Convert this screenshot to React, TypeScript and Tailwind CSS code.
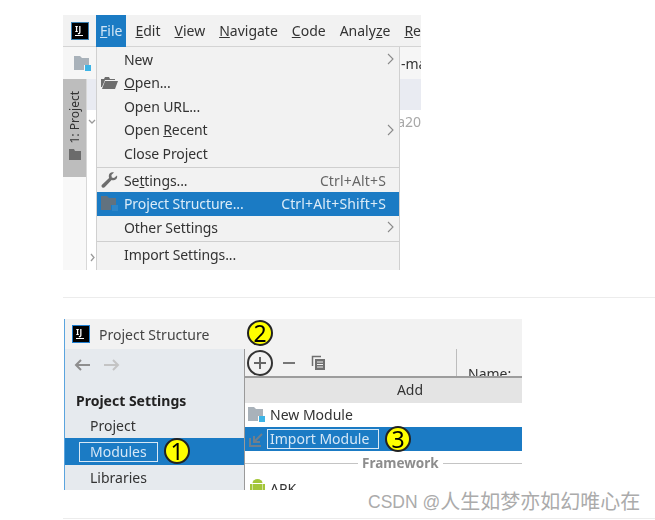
import React from "react";

const Chevron = () => (
  <svg width="7" height="12" viewBox="0 0 7 12" className="absolute right-[5px] top-[5px]" fill="none" stroke="#8a8a8a" strokeWidth="1.1">
    <path d="M1 1l5 5-5 5" />
  </svg>
);

const FolderBlue = ({ body = "#a9b2ba", dot = "#3db4e6" }: { body?: string; dot?: string }) => (
  <svg width="18" height="17" viewBox="0 0 18 17" className="shrink-0">
    <path d="M0 1h6l2 2h7v7h-5v5H0z" fill={body} />
    <rect x="11" y="10" width="6" height="6" fill={dot} />
  </svg>
);

const Logo = ({ blue = false }: { blue?: boolean }) => (
  <div className={`w-[18px] h-[18px] bg-black flex flex-col px-[3px] pt-[1px] shrink-0 ${blue ? "border border-[#1f7ed0]" : "border border-[#3a7fb0]"}`}>
    <span className="text-white text-[8px] font-bold leading-[9px] tracking-[0.5px]">IJ</span>
    <span className="w-[8px] h-[1px] bg-white mt-[2px]" />
  </div>
);

const Badge = ({ n, className }: { n: string; className: string }) => (
  <div className={`absolute z-20 w-[26px] h-[26px] rounded-full bg-[#ffff00] border-2 border-[#222] flex items-center justify-center text-[23px] leading-none text-black ${className}`}>
    {n}
  </div>
);

type Item = { label: React.ReactNode; h: string; shortcut?: string; arrow?: boolean; icon?: React.ReactNode; active?: boolean };

const MenuRow = ({ label, h, shortcut, arrow, icon, active }: Item) => (
  <div className={`relative flex items-center shrink-0 pl-[27px] pr-[13px] ${h} ${active ? "bg-[#1b7bc4] text-[#dcecf8]" : "text-[#333]"}`}>
    {icon && <span className="absolute left-[4px] top-[3px] flex">{icon}</span>}
    <span className="flex-1 tracking-[-0.1px]">{label}</span>
    {shortcut && <span className={`tracking-[0.15px] ${active ? "text-[#dcecf8]" : "text-[#666]"}`}>{shortcut}</span>}
    {arrow && <Chevron />}
  </div>
);

const Sep = () => <div className="h-[1px] bg-[#cfcfcf] my-[1px] shrink-0" />;

export default function App() {
  return (
    <div className="relative w-[655px] h-[520px] bg-white overflow-hidden text-[14px] text-[#333] font-['Noto_Sans','Noto_Sans_CJK_SC',sans-serif]">
      <div className="h-[15px]" />
      {/* First screenshot */}
      <div className="relative ml-[63px] w-[358px] h-[255px] overflow-hidden bg-white flex flex-col blur-[0.35px]">
        <div className="h-[32px] bg-[#f2f2f2] border-b border-[#d4d4d4] flex items-center shrink-0">
          <div className="ml-[8px] mr-[7px]"><Logo /></div>
          <div className="h-[32px] w-[34px] bg-[#1b7bc4] text-[#cfe4f5] flex items-center justify-center"><span><u>F</u>ile</span></div>
          <div className="flex gap-[14px] ml-[9px] whitespace-nowrap">
            <span><u>E</u>dit</span>
            <span><u>V</u>iew</span>
            <span><u>N</u>avigate</span>
            <span><u>C</u>ode</span>
            <span>Analy<u>z</u>e</span>
            <span><u>R</u>e</span>
          </div>
        </div>
        <div className="h-[32px] bg-[#f6f6f6] flex items-center pl-[11px] shrink-0">
          <FolderBlue />
          <span className="ml-[309px] whitespace-nowrap">-ma</span>
        </div>
        <div className="flex flex-1 min-h-0">
          <div className="w-[24px] flex flex-col bg-[#f8f8f8] border-r border-[#d8d8d8]">
            <div className="h-[98px] bg-[#bdbdbd] flex flex-col items-center pt-[12px] gap-[6px] shrink-0">
              <span className="[writing-mode:vertical-rl] rotate-180 text-[12px] leading-none">1: Project</span>
              <svg width="12" height="11" viewBox="0 0 12 11"><path d="M0 0h5l1 2h6v9H0z" fill="#6b6b6b" /></svg>
            </div>
          </div>
          <div className="flex-1 flex flex-col">
            <div className="h-[31px] bg-[#e9ebf2] shrink-0" />
            <div className="flex-1 bg-white flex justify-end items-start pt-[1px] text-[#a8a8a8]">
              <span>a20</span>
            </div>
          </div>
        </div>
        <svg width="8" height="6" viewBox="0 0 8 6" className="absolute left-[25px] top-[104px]" fill="none" stroke="#9a9a9a" strokeWidth="1.300"><path d="M1 1l3 3 3-3" /></svg>
        <svg width="6" height="9" viewBox="0 0 6 9" className="absolute left-[27px] top-[238px]" fill="none" stroke="#9a9a9a" strokeWidth="1.300"><path d="M1 1l3 3.500-3 3.500" /></svg>

        {/* File menu */}
        <div className="absolute left-[33px] top-[32px] w-[304px] h-[223px] bg-[#f2f2f2] border-x border-[#d0d0d0] pt-[1px] flex flex-col">
          <MenuRow label="New" h="h-[24px] pb-[2px]" arrow />
          <MenuRow
            label={<><u>O</u>pen...</>}
            h="h-[23px] pb-[2px]"
            icon={
              <svg width="18" height="14" viewBox="0 0 18 14" className="mt-[1px]">
                <path d="M0 3h3l1-2h4l1 2h5v1H4L1 11H0z" fill="#6d6d6d" />
                <path d="M4 5h13l-3 8H1z" fill="#6d6d6d" />
              </svg>
            }
          />
          <MenuRow label="Open URL..." h="h-[24px] pb-[2px]" />
          <MenuRow label={<>Open <u>R</u>ecent</>} h="h-[23px] pb-[2px]" arrow />
          <MenuRow label="Close Project" h="h-[24px] pb-[2px]" />
          <Sep />
          <MenuRow
            label={<>Se<u>t</u>tings...</>}
            h="h-[23px]"
            shortcut="Ctrl+Alt+S"
            icon={
              <svg width="17" height="17" viewBox="0 0 17 17">
                <path d="M16 3.500l-3 2.500-2.200-.6L10.400 3 13 .6C10.500-.4 7.600 1.200 7.800 4.400c0 .6.2 1 .3 1.500L1 12.800c-.9 1-.6 2.200 1 3 .8.100 1.400-.2 1.900-.7l6.700-7c3.300 1.100 6.400-1.300 5.400-4.600z" fill="#6d6d6d" />
              </svg>
            }
          />
          <MenuRow
            label="Project Structure..."
            h="h-[24px] pb-[2px]"
            shortcut="Ctrl+Alt+Shift+S"
            active
            icon={<FolderBlue body="#62727f" dot="#2f86c8" />}
          />
          <MenuRow label="Other Settings" h="h-[24px] pb-[2px]" arrow />
          <Sep />
          <MenuRow label="Import Settings..." h="h-[24px] pb-[2px]" />
        </div>
      </div>

      <div className="h-[27px]" />
      <div className="h-[1px] bg-[#ececec] ml-[63px] w-[592px]" />
      <div className="h-[21px]" />

      {/* Second screenshot */}
      <div className="relative ml-[64px] w-[458px] h-[171px] overflow-hidden bg-[#f2f2f2] flex flex-col border-l border-l-[#5aa4de] blur-[0.35px]">
        <div className="h-[30px] flex items-center pl-[7px] gap-[9px] shrink-0">
          <Logo blue />
          <span className="text-[#444]">Project Structure</span>
        </div>
        <div className="flex flex-1 min-h-0">
          <div className="w-[180px] bg-[#e6eaee] border-r border-[#9a9a9a] flex flex-col shrink-0">
            <div className="h-[32px] flex items-center pl-[9px] gap-[14px] shrink-0">
              <svg width="16" height="12" viewBox="0 0 16 12" fill="none" stroke="#8e8e8e" strokeWidth="2"><path d="M16 6H2M7 1L2 6l5 5" /></svg>
              <svg width="16" height="12" viewBox="0 0 16 12" fill="none" stroke="#c4c4c4" strokeWidth="2"><path d="M0 6h14M9 1l5 5-5 5" /></svg>
            </div>
            <div className="h-[32px] flex items-end pl-[11px] font-bold text-[#222] leading-[20px] pb-[2px] shrink-0">Project Settings</div>
            <div className="h-[25px] flex items-center pl-[25px] pb-[1px] shrink-0">Project</div>
            <div className="h-[27px] bg-[#1b7bc4] flex items-center pl-[14px] shrink-0">
              <div className="w-[79px] h-[20px] border border-[#d8e8f5] flex items-center pl-[10px] pb-[1px] text-[#d5e7f6]">Modules</div>
            </div>
            <div className="h-[25px] flex items-center pl-[25px] pb-[1px] shrink-0">Libraries</div>
          </div>
          <div className="flex-1 flex flex-col min-w-0">
            <div className="h-[27px] flex items-center shrink-0 relative pl-[38px]">
              <svg width="12" height="2" viewBox="0 0 12 2"><rect width="12" height="2" fill="#777" /></svg>
              <svg width="15" height="15" viewBox="0 0 15 15" className="ml-[16px]" fill="none">
                <path d="M1.500 11V1.500H10" stroke="#6f6f6f" strokeWidth="1.500" />
                <rect x="4" y="4" width="10" height="11" fill="#6f6f6f" />
                <path d="M6 7h6M6 9.500h6M6 12h6" stroke="#f2f2f2" strokeWidth="1" />
              </svg>
              <div className="absolute left-[211px] top-0 h-[27px] w-[1px] bg-[#bdbdbd]" />
              <span className="absolute left-[223px] top-[15px] leading-[20px] text-[#333]">Name:</span>
            </div>
            <div className="flex-1 flex flex-col bg-white border-t-2 border-[#9d9d9d] relative z-10 min-h-0">
              <div className="h-[25px] bg-[#e4e4e4] flex items-center justify-center pl-[53px] pb-[2px] shrink-0">Add</div>
              <div className="h-[24px] flex items-center pl-[3px] gap-[4px] pb-[1px] shrink-0">
                <FolderBlue />
                <span>New Module</span>
              </div>
              <div className="h-[24px] bg-[#1b7bc4] flex items-center pl-[4px] shrink-0">
                <svg width="15" height="15" viewBox="0 0 15 15" fill="none" stroke="#6f7f8c" strokeWidth="2" className="shrink-0">
                  <path d="M1 6v8h11M13 2L5 10M5 4v6h6" />
                </svg>
                <div className="ml-[3px] w-[112px] h-[20px] border border-[#d8e8f5] flex items-center pl-[2px] pb-[1px] text-[#d5e7f6] whitespace-nowrap">Import Module</div>
              </div>
              <div className="h-[25px] flex items-center gap-[4px] shrink-0 pb-[1px]">
                <div className="w-[113px] h-[1px] bg-[#c4c4c4] shrink-0" />
                <span className="font-bold text-[13.5px] text-[#8d8d8d]">Framework</span>
                <div className="flex-1 h-[1px] bg-[#c4c4c4]" />
              </div>
              <div className="h-[24px] flex items-center pl-[5px] gap-[5px] shrink-0">
                <svg width="15" height="18" viewBox="0 0 15 18" fill="#a4c639">
                  <path d="M2.500 4a5 4 0 0 1 10 0z" />
                  <rect x="2.500" y="5" width="10" height="9" />
                  <rect x="0" y="5" width="2" height="7" />
                  <rect x="13" y="5" width="2" height="7" />
                </svg>
                <span>APK</span>
              </div>
            </div>
          </div>
        </div>
        <Badge n="1" className="left-[99px] top-[119px]" />
        <Badge n="2" className="left-[182px] top-[1px]" />
        <Badge n="3" className="left-[320px] top-[107px]" />
        <div className="absolute z-20 left-[182px] top-[31px] w-[26px] h-[26px] rounded-full border-2 border-[#333] flex items-center justify-center">
          <svg width="12" height="12" viewBox="0 0 12 12"><path d="M6 0v12M0 6h12" stroke="#666" strokeWidth="2" /></svg>
        </div>
      </div>

      <div className="h-[28px]" />
      <div className="h-[1px] bg-[#ececec] ml-[63px] w-[592px]" />

      <div className="absolute left-[368px] top-[490px] h-[24px] flex items-center text-[#ababab] whitespace-nowrap font-['Liberation_Sans','Noto_Sans_CJK_SC',sans-serif]">
        <span className="text-[17.5px]">CSDN @</span>
        <span className="text-[20px]">人生如梦亦如幻唯心在</span>
      </div>
    </div>
  );
}
